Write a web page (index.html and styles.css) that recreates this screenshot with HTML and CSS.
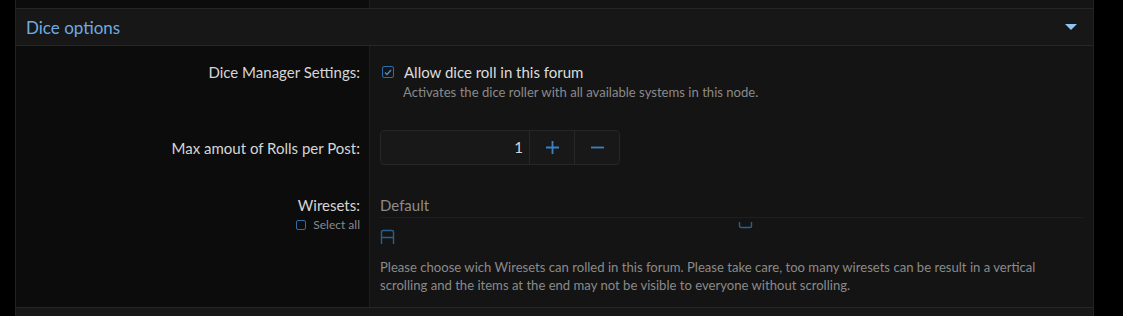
FILE: index.html
```html
<!DOCTYPE html>
<html>
<head>
<meta charset="utf-8">
<link rel="stylesheet" href="styles.css">
</head>
<body>
<div class="block">
  <div class="row row-top">
    <div class="dt"></div>
    <div class="dd"></div>
  </div>
  <div class="header">
    <span class="header-title">Dice options</span>
    <svg class="caret" width="12" height="8" viewBox="0 0 12 8"><path d="M0 1 H12 L6 7 Z" fill="#8fc3f0"/></svg>
  </div>
  <div class="form">
    <div class="row row-dice">
      <div class="dt"><span class="label">Dice Manager Settings:</span></div>
      <div class="dd">
        <label class="check">
          <span class="box checked"><svg width="8" height="7" viewBox="0 0 8 7"><path d="M1 3.5 L3 5.5 L7 1" fill="none" stroke="#4a90d0" stroke-width="1.3"/></svg></span>
          <span class="check-text">Allow dice roll in this forum</span>
        </label>
        <div class="hint hint-indent">Activates the dice roller with all available systems in this node.</div>
      </div>
    </div>
    <div class="row row-max">
      <div class="dt"><span class="label">Max amout of Rolls per Post:</span></div>
      <div class="dd">
        <div class="spinbox">
          <span class="spin-value">1</span>
          <span class="spin-btn plus"><svg width="13" height="13" viewBox="0 0 13 13"><path d="M6.5 0 V13 M0 6.5 H13" stroke="#3a80c2" stroke-width="1.8"/></svg></span>
          <span class="spin-btn minus"><svg width="13" height="13" viewBox="0 0 13 13"><path d="M0 6.5 H13" stroke="#3a80c2" stroke-width="1.8"/></svg></span>
        </div>
      </div>
    </div>
    <div class="row row-wire">
      <div class="dt">
        <div class="label wire-label">Wiresets:</div>
        <label class="select-all"><span class="box small"></span><span>Select all</span></label>
      </div>
      <div class="dd">
        <div class="default">Default</div>
        <div class="wire-list">
          <svg class="icon-a" width="15" height="16" viewBox="0 0 15 16"><path d="M1.5 15 V3 Q1.5 1.5 3 1.5 H12 Q13.5 1.5 13.5 3 V15 M1.5 8.5 H13.5" fill="none" stroke="#2b5f8e" stroke-width="1.4"/></svg>
          <svg class="icon-u" width="15" height="7" viewBox="0 0 15 7"><path d="M1.5 0 V4 Q1.5 5.5 3 5.5 H12 Q13.5 5.5 13.5 4 V0" fill="none" stroke="#2b5f8e" stroke-width="1.4"/></svg>
        </div>
        <div class="hint long">Please choose wich Wiresets can rolled in this forum. Please take care, too many wiresets can be result in a vertical scrolling and the items at the end may not be visible to everyone without scrolling.</div>
      </div>
    </div>
  </div>
  <div class="footer"></div>
</div>
</body>
</html>
```
FILE: styles.css
```css
html, body {
  margin: 0;
  padding: 0;
  background: #000;
  height: 316px;
  overflow: hidden;
}
body {
  font-family: Lato, "Open Sans", sans-serif;
  color: #d2d2d2;
}
.block {
  margin-left: 15px;
  width: 1079px;
  border-left: 1px solid #222;
  border-right: 1px solid #222;
  box-sizing: border-box;
  background: #141414;
}
.row {
  display: flex;
}
.dt {
  flex: none;
  width: 354px;
  background: #0c0c0c;
  border-right: 1px solid #1e1e1e;
  text-align: right;
  padding-right: 9px;
  box-sizing: border-box;
}
.dd {
  flex: 1;
  padding-left: 10px;
  padding-right: 10px;
}
.row-top {
  height: 8px;
  border-bottom: 1px solid #262626;
}
.header {
  height: 36px;
  background: #171717;
  border-bottom: 1px solid #262626;
  display: flex;
  align-items: center;
  justify-content: space-between;
  padding: 0 16px 0 10px;
}
.header-title {
  color: #6fabe3;
  font-size: 17px;
}
.caret {
  display: block;
}
.label {
  font-size: 15px;
  line-height: 20px;
  color: #d6d6d6;
}
.row-dice .dt, .row-dice .dd {
  padding-top: 16px;
  padding-bottom: 28px;
}
.check {
  display: flex;
  align-items: center;
  gap: 10px;
  height: 20px;
  padding-left: 2px;
}
.box {
  width: 11px;
  height: 11px;
  border: 1px solid #2e6ea6;
  border-radius: 2px;
  display: inline-flex;
  align-items: center;
  justify-content: center;
  box-sizing: border-box;
  flex: none;
}
.box.checked {
  width: 12px;
  height: 12px;
}
.check-text {
  font-size: 15px;
  color: #dcdcdc;
}
.hint {
  font-size: 13.1px;
  color: #8a8a8a;
  line-height: 18px;
}
.hint-indent {
  padding-left: 23px;
  margin-top: 1px;
}
.row-max .dt, .row-max .dd {
  padding-top: 1px;
  padding-bottom: 23px;
}
.row-max .dt {
  display: flex;
  align-items: center;
  justify-content: flex-end;
}
.spinbox {
  display: flex;
  width: 240px;
  height: 35px;
  border: 1px solid #262626;
  border-radius: 4px;
  background: #181818;
  box-sizing: border-box;
}
.spin-value {
  flex: 1;
  text-align: right;
  padding-right: 6px;
  font-size: 15px;
  line-height: 33px;
  color: #d6d6d6;
  border-right: 1px solid #262626;
}
.spin-btn {
  width: 44px;
  display: flex;
  align-items: center;
  justify-content: center;
}
.spin-btn svg {
  display: block;
}
.spin-btn.plus {
  border-right: 1px solid #262626;
}
.row-wire .dt, .row-wire .dd {
  padding-top: 7px;
  padding-bottom: 13px;
}
.select-all {
  display: flex;
  justify-content: flex-end;
  align-items: center;
  gap: 7px;
  font-size: 12px;
  color: #8a8a8a;
  margin-top: 2px;
}
.box.small {
  width: 10px;
  height: 10px;
}
.default {
  font-size: 15px;
  color: #8c8c8c;
  line-height: 20px;
  padding-bottom: 2px;
  border-bottom: 1px solid #1e1e1e;
}
.wire-list {
  position: relative;
  height: 30px;
}
.icon-a {
  position: absolute;
  left: 0;
  top: 11px;
}
.icon-u {
  position: absolute;
  left: 358px;
  top: 4px;
}
.long {
  margin-top: 10px;
  line-height: 18px;
}
.footer {
  height: 20px;
  background: #171717;
  border-top: 1px solid #262626;
}
```
